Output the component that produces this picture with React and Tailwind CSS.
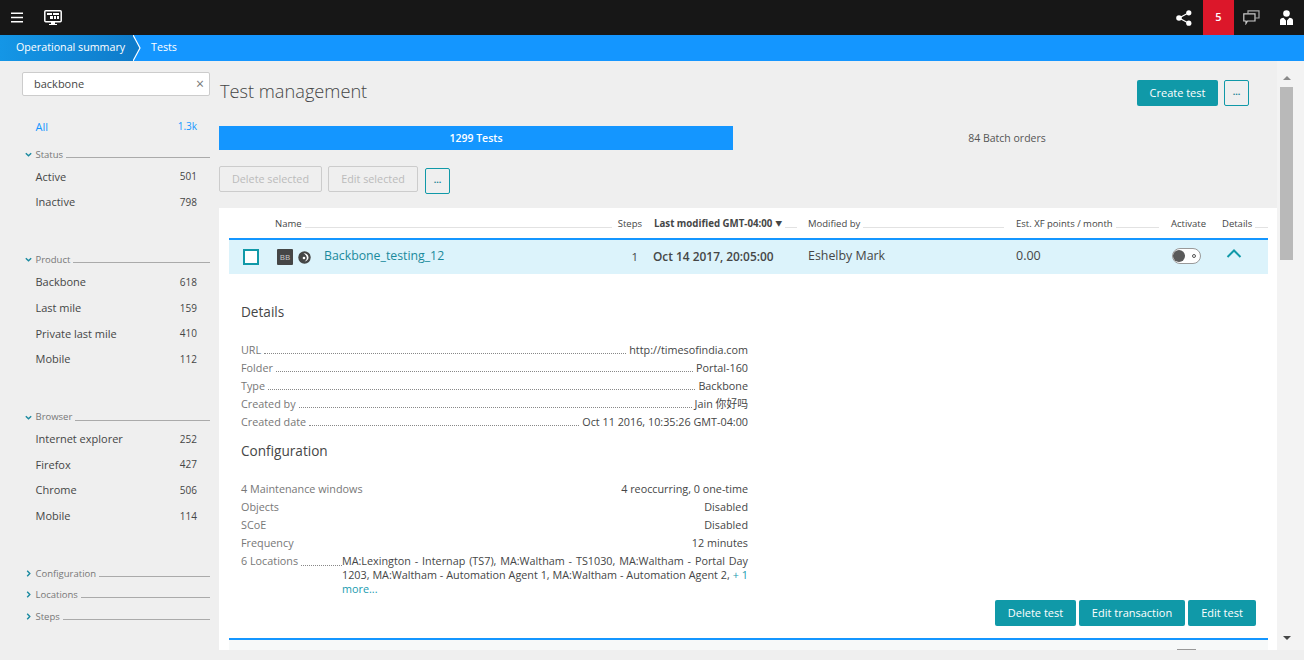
const FONT = "font-['Open_Sans','Noto_Sans_CJK_SC',sans-serif]";

function Chevron({ open }) {
  return (
    <svg width="7" height="7" viewBox="0 0 7 7" className="shrink-0 fill-none stroke-[#1a8aa0] stroke-[1.4]">
      {open ? <path d="M0.8 2.2 L3.5 4.8 L6.2 2.2" /> : <path d="M2.2 0.8 L4.8 3.5 L2.2 6.2" />}
    </svg>
  );
}

function SectionHead({ label, open = true, className = "" }) {
  return (
    <div className={`flex items-center pl-[25px] h-[14px] ${className}`}>
      <span className="w-[10.5px] flex justify-start"><Chevron open={open} /></span>
      <span className="text-[9.5px] leading-[14px] text-[#777]">{label}</span>
      <span className="flex-1 ml-[3px] mt-[6px] border-t border-[#aaa]" />
    </div>
  );
}

function FacetRow({ label, n, active }) {
  return (
    <div className={`flex justify-between items-center h-[25.6px] pl-[35.5px] pr-[13px] text-[11px] ${active ? "text-[#1496ff]" : "text-[#454646]"}`}>
      <span>{label}</span>
      <span className="text-[10px]">{n}</span>
    </div>
  );
}

function Sidebar() {
  return (
    <aside className="w-[219px] shrink-0 pt-[11px] pr-[9px]">
      <div className="ml-[22px] h-[24px] bg-white border border-[#ccc] rounded-[2px] flex items-center justify-between pl-[11px] pr-[5px]">
        <span className="text-[11px] text-[#454646]">backbone</span>
        <span className="text-[14px] leading-none text-[#777]">×</span>
      </div>
      <div className="mt-[18px]">
        <FacetRow label="All" n="1.3k" active />
      </div>
      <SectionHead label="Status" className="mt-[8px]" />
      <div className="mt-[2.6px]">
        <FacetRow label="Active" n="501" />
        <FacetRow label="Inactive" n="798" />
      </div>
      <SectionHead label="Product" className="mt-[37.4px]" />
      <div className="mt-[3px]">
        <FacetRow label="Backbone" n="618" />
        <FacetRow label="Last mile" n="159" />
        <FacetRow label="Private last mile" n="410" />
        <FacetRow label="Mobile" n="112" />
      </div>
      <SectionHead label="Browser" className="mt-[38px]" />
      <div className="mt-[2.4px]">
        <FacetRow label="Internet explorer" n="252" />
        <FacetRow label="Firefox" n="427" />
        <FacetRow label="Chrome" n="506" />
        <FacetRow label="Mobile" n="114" />
      </div>
      <SectionHead label="Configuration" open={false} className="mt-[37.6px]" />
      <SectionHead label="Locations" open={false} className="mt-[7px]" />
      <SectionHead label="Steps" open={false} className="mt-[8px]" />
    </aside>
  );
}

function TealBtn({ children, className = "" }) {
  return (
    <button className={`h-[26px] bg-[#1099a8] rounded-[2px] text-white text-[11px] ${className}`}>{children}</button>
  );
}

function DotsBtn() {
  return (
    <button className="w-[25px] h-[26px] border border-[#1099a8] rounded-[2px] text-[#1a7f93] text-[9px] font-bold leading-none pb-[3px]">...</button>
  );
}

function HeadCell({ children, line = true, className = "" }) {
  return (
    <div className={`flex items-center h-full ${className}`}>
      <span className="text-[9.5px] text-[#454646] whitespace-nowrap">{children}</span>
      {line ? <span className="flex-1 ml-[3px] mt-[6px] border-t border-[#e2e2e2]" /> : null}
    </div>
  );
}

function KV({ k, v, dotted = true }) {
  return (
    <div className="flex h-[18px] items-center text-[10.8px]">
      <span className="text-[#777] whitespace-nowrap">{k}</span>
      {dotted ? <span className="flex-1 mx-[3px] mt-[6px] border-t border-dotted border-[#888]" /> : <span className="flex-1" />}
      <span className="text-[#454646] whitespace-nowrap">{v}</span>
    </div>
  );
}

function Monitor() {
  return (
    <svg width="18" height="16" viewBox="0 0 18 16">
      <rect x="0.8" y="0.8" width="16.4" height="11" rx="1" fill="#171717" stroke="#fff" strokeWidth="1.5" />
      <path d="M3 3h5v2H3zM9 3h6v2H9zM6 6h3v3H6zM10 6h2v3h-2zM13 6h2v3h-2z" fill="#fff" />
      <path d="M7 12h4v2h2v1H5v-1h2z" fill="#fff" />
    </svg>
  );
}

function Share() {
  return (
    <svg width="16" height="16" viewBox="0 0 16 16" fill="#fff">
      <circle cx="3" cy="8" r="2.8" />
      <circle cx="12.8" cy="2.8" r="2.6" />
      <circle cx="12.8" cy="13.2" r="2.6" />
      <path d="M3 8 L12.8 2.8 M3 8 L12.8 13.2" stroke="#fff" strokeWidth="1.3" />
    </svg>
  );
}

function Chat() {
  return (
    <svg width="17" height="15" viewBox="0 0 17 15" fill="none" stroke="#aaa" strokeWidth="1.2">
      <path d="M5 3.5V0.8H16V8H12.5" />
      <path d="M0.8 3.8H12V11H4.5L3 13.5V11H0.8z" fill="#171717" stroke="#ccc" />
    </svg>
  );
}

function User() {
  return (
    <svg width="13" height="15" viewBox="0 0 13 15" fill="#fff">
      <circle cx="6.5" cy="3.5" r="3.3" />
      <path d="M0 15V10.5C0 8.8 1.5 7.8 3.5 7.8L6 10.5V15zM13 15V10.5C13 8.8 11.5 7.8 9.5 7.8L7 10.5V15z" />
    </svg>
  );
}

function Toggle() {
  return (
    <span className="relative block w-[29px] h-[16px] rounded-full border border-[#999] bg-white ml-[1px] -mt-[3px]">
      <span className="absolute left-0 top-[1px] w-[12px] h-[12px] rounded-full bg-[#5a5a5a]" />
      <span className="absolute right-[4px] top-[5px] w-[4px] h-[4px] rounded-full border border-[#555]" />
    </span>
  );
}

const GRID = "grid grid-cols-[46px_379px_154px_208px_155px_51px_46px]";

function Card() {
  return (
    <section className="mt-[16px] bg-white pl-[10px] pr-[9px] h-[442px] overflow-hidden">
      <div className={`${GRID} h-[30px] pt-[2px]`}>
        <span />
        <div className="flex items-center h-full pr-[12px]">
          <span className="text-[9.5px] text-[#454646]">Name</span>
          <span className="flex-1 ml-[3px] mt-[6px] border-t border-[#e2e2e2]" />
          <span className="text-[9.5px] text-[#454646] ml-[6px]">Steps</span>
        </div>
        <div className="flex items-center h-full pr-[11px]">
          <span className="text-[9.7px] text-[#454646] font-bold whitespace-nowrap">Last modified GMT-04:00</span>
          <span className="text-[7px] text-[#454646] ml-[3px]">▼</span>
          <span className="flex-1 ml-[3px] mt-[6px] border-t border-[#e2e2e2]" />
        </div>
        <HeadCell className="pr-[12px]">Modified by</HeadCell>
        <HeadCell className="pr-[12px]">Est. XF points / month</HeadCell>
        <HeadCell line={false}>Activate</HeadCell>
        <HeadCell>Details</HeadCell>
      </div>
      <div className={`${GRID} h-[36px] border-t-2 border-[#1496ff] bg-[#dcf3fb] items-center text-[#454646]`}>
        <span className="ml-[14px] w-[16px] h-[16px] border-2 border-[#1099a8] bg-white" />
        <div className="flex items-center pr-[12px] pl-[2px]">
          <span className="w-[16px] h-[16px] bg-[#454646] rounded-[1px] text-[8px] text-[#ccc] flex items-center justify-center">BB</span>
          <svg width="13" height="13" viewBox="0 0 13 13" className="ml-[5px]">
            <circle cx="6.5" cy="6.5" r="6.2" fill="#454646" />
            <path d="M5.5 2.300a4.300 4.300 0 0 1 5 3.900a4 4 0 0 1-3.900 4.200c1.300-.7 2.300-2.100 2.200-3.700C8.700 5 7.300 3.100 5.500 2.300z" fill="#fff" />
            <circle cx="6" cy="7" r="1.300" fill="#fff" />
          </svg>
          <span className="ml-[13px] text-[#1a8a9c] text-[12.300px] font-medium -mt-[2px]">Backbone_testing_12</span>
          <span className="flex-1" />
          <span className="text-[11.5px] mr-[4px] -mt-[1px]">1</span>
        </div>
        <span className="text-[11.9px] font-semibold whitespace-nowrap -ml-[1px] -mt-[1px]">Oct 14 2017, 20:05:00</span>
        <span className="text-[12.4px] -mt-[1px]">Eshelby Mark</span>
        <span className="text-[12.5px] -mt-[1px]">0.00</span>
        <Toggle />
        <svg width="16" height="9" viewBox="0 0 16 9" className="ml-[4px] -mt-[8px] fill-none stroke-[#1099a8] stroke-2">
          <path d="M1.5 8 L8 1.5 L14.5 8" />
        </svg>
      </div>
      <div className="pl-[12px] pt-[29px]">
        <h2 className="text-[13.6px] leading-[18px] text-[#454646]">Details</h2>
        <div className="w-[507px] mt-[20px]">
          <KV k="URL" v="http://timesofindia.com" />
          <KV k="Folder" v="Portal-160" />
          <KV k="Type" v="Backbone" />
          <KV k="Created by" v="Jain 你好吗" />
          <KV k="Created date" v="Oct 11 2016, 10:35:26 GMT-04:00" />
        </div>
        <h2 className="text-[13.6px] leading-[18px] text-[#454646] mt-[11px]">Configuration</h2>
        <div className="w-[507px] mt-[20px]">
          <KV k="4 Maintenance windows" v="4 reoccurring, 0 one-time" dotted={false} />
          <KV k="Objects" v="Disabled" dotted={false} />
          <KV k="SCoE" v="Disabled" dotted={false} />
          <KV k="Frequency" v="12 minutes" dotted={false} />
          <div className="flex text-[10.8px] leading-[14px] mt-[2px]">
            <span className="text-[#777] whitespace-nowrap w-[60px] shrink-0">6 Locations</span>
            <span className="w-[41px] shrink-0 mb-auto mt-[11px] border-t border-dotted border-[#888]" />
            <p className="flex-1 text-[#454646] text-justify">
              MA:Lexington - Internap (TS7), MA:Waltham - TS1030, MA:Waltham - Portal Day 1203, MA:Waltham - Automation Agent 1, MA:Waltham - Automation Agent 2, <a className="text-[#1a9bb0]">+ 1 more...</a>
            </p>
          </div>
        </div>
      </div>
      <div className="flex justify-end gap-[3px] pr-[12px] mt-[4px]">
        <TealBtn className="w-[81px]">Delete test</TealBtn>
        <TealBtn className="w-[106px]">Edit transaction</TealBtn>
        <TealBtn className="w-[68px]">Edit test</TealBtn>
      </div>
      <div className="mt-[12px] border-t-2 border-[#1496ff] bg-[#f7f9f9] h-[12px] relative">
        <span className="absolute left-[948px] top-[9px] w-[19px] h-[1px] bg-[#999]" />
      </div>
    </section>
  );
}

function Scrollbar() {
  return (
    <div className="w-[27px] shrink-0 pt-[13px] pl-[3px] h-[589px] bg-[#f3f3f3]">
      <div className="w-[13px] h-[575px] flex flex-col items-center">
        <span className="mt-[2px] w-0 h-0 border-l-[4px] border-r-[4px] border-b-[4px] border-l-transparent border-r-transparent border-b-[#8a8a8a]" />
        <span className="mt-[7px] w-full h-[173px] bg-[#b9b9b9]" />
        <span className="flex-1" />
        <span className="mb-[9px] w-0 h-0 border-l-[4px] border-r-[4px] border-t-[4px] border-l-transparent border-r-transparent border-t-[#454646]" />
      </div>
    </div>
  );
}

export default function App() {
  return (
    <div className={`${FONT} w-[1304px] h-[660px] overflow-hidden bg-[#efefef] text-[#454646]`}>
      <header className="h-[35px] bg-[#171717] flex items-center">
        <svg width="12" height="11" viewBox="0 0 12 11" className="ml-[11px]" stroke="#fff" strokeWidth="1.5">
          <path d="M0 1.2h12M0 5.5h12M0 9.8h12" />
        </svg>
        <span className="ml-[21px]"><Monitor /></span>
        <span className="flex-1" />
        <Share />
        <span className="ml-[11px] w-[31px] h-[35px] bg-[#dc172a] text-white text-[11px] font-semibold flex items-center justify-center">5</span>
        <span className="w-[35px] flex justify-center"><Chat /></span>
        <span className="w-[35px] flex justify-center"><User /></span>
      </header>
      <nav className="h-[26px] bg-[#1496ff] flex items-center text-white text-[10.7px]">
        <div className="relative h-full pl-[16px] pr-[7px] w-[133px] flex items-center bg-gradient-to-r from-[#1496e6] to-[#0f7ccb]">
          <span className="whitespace-nowrap pb-[1px]">Operational summary</span>
          <svg width="8" height="26" viewBox="0 0 8 26" className="absolute -right-[8px] top-0">
            <path d="M0 0 L7 13 L0 26z" fill="#0f7ccb" />
            <path d="M0 0 L7 13 L0 26" fill="none" stroke="#fff" strokeWidth="1.2" />
          </svg>
        </div>
        <span className="ml-[18px] pb-[1px]">Tests</span>
      </nav>
      <div className="flex h-[599px]">
        <Sidebar />
        <main className="flex-1 min-w-0">
          <div className="flex items-center h-[26px] mt-[19px] pr-[28px]">
            <h1 className="text-[18.200px] font-light text-[#454646] ml-[1px] -mt-[2px]">Test management</h1>
            <span className="flex-1" />
            <TealBtn className="w-[81px] mr-[6px]">Create test</TealBtn>
            <DotsBtn />
          </div>
          <div className="flex h-[24px] mt-[20px] text-[10.5px]">
            <div className="w-[514px] shrink-0 bg-[#1496ff] text-white font-semibold flex items-center justify-center pt-[1px]">1299 Tests</div>
            <div className="w-[548px] shrink-0 flex items-center justify-center text-[#555] pt-[1px]">84 Batch orders</div>
          </div>
          <div className="flex items-center h-[26px] mt-[16px] gap-[6px]">
            <button className="w-[103px] h-[26px] border border-[#ccc] rounded-[2px] text-[10.8px] text-[#bbb]">Delete selected</button>
            <button className="w-[90px] h-[26px] border border-[#ccc] rounded-[2px] text-[10.8px] text-[#bbb]">Edit selected</button>
            <span className="ml-[1px]"><DotsBtn /></span>
          </div>
          <Card />
        </main>
        <Scrollbar />
      </div>
    </div>
  );
}
